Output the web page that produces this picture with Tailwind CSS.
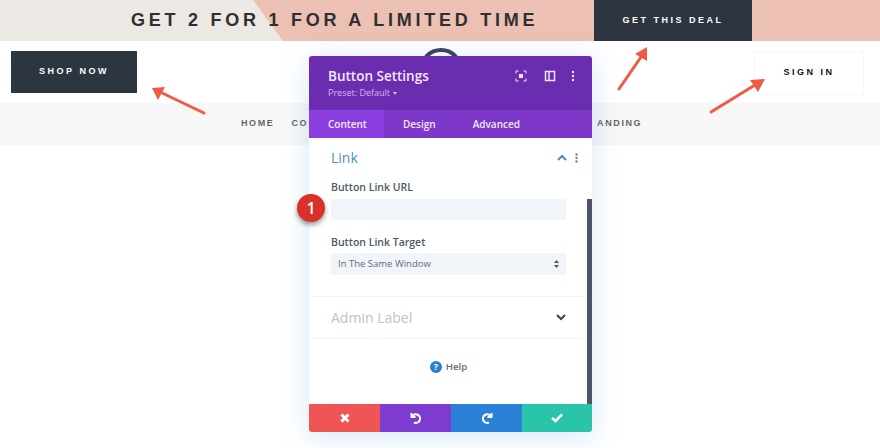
<!DOCTYPE html>
<html lang="en">
<head>
    <meta charset="UTF-8">
    <title>Button Settings</title>
    <script src="https://cdn.jsdelivr.net/npm/@tailwindcss/browser@4"></script>
</head>
<body class="bg-white">
    <div class="relative w-[880px] h-[448px] overflow-hidden font-['Liberation_Sans',sans-serif]">
        <!-- Promo bar -->
        <div class="relative h-[41px] bg-[#ecc0b2] flex">
            <div class="absolute inset-y-0 left-0 w-[283px] bg-[#ece8e3] [clip-path:polygon(0_0,253px_0,283px_100%,0_100%)]"></div>
            <div class="relative w-[594px] pl-[131px] pb-[1px] flex items-center text-[18px] font-bold tracking-[3.75px] text-[#2f2f33] whitespace-nowrap">GET 2 FOR 1 FOR A LIMITED TIME</div>
            <div class="relative w-[158px] bg-[#2c3540] flex items-center justify-center text-[9px] font-bold tracking-[2.5px] text-white">GET THIS DEAL</div>
        </div>

        <!-- Header -->
        <div class="h-[62px] flex items-start justify-between pt-[10px] pl-[11px] pr-[16px]">
            <div class="w-[126px] h-[42px] bg-[#2c3540] flex items-center justify-center text-[9px] font-bold tracking-[2.5px] text-white">SHOP NOW</div>
            <div class="w-[44px] h-[44px] mt-[-3px] mr-[9px] rounded-full border-[4px] border-[#3a3f5c]"></div>
            <div class="w-[110px] h-[44px] border border-[#f6f6f6] flex items-center justify-center text-[9px] font-bold tracking-[2.5px] text-[#111]">SIGN IN</div>
        </div>

        <!-- Nav -->
        <div class="h-[42px] pl-[241px] bg-[#f7f7f7] flex items-center text-[9px] font-bold tracking-[1.6px] text-[#666]">
            <span>HOME</span>
            <span class="ml-[17px]">CO</span>
            <span class="ml-[289px]">ANDING</span>
        </div>

        <!-- Arrows -->
        <svg class="absolute inset-0" width="880" height="448" fill="none" stroke="#ee5a45" stroke-width="3" stroke-linecap="round">
            <path d="M204 113 L160 92"/>
            <path d="M152 88 L165 87 L158 100 Z" fill="#ee5a45" stroke="none"/>
            <path d="M619 89 L641 57"/>
            <path d="M647 47 L647 61 L635 54 Z" fill="#ee5a45" stroke="none"/>
            <path d="M711 112 L755 85"/>
            <path d="M765 79 L758 92 L750 80 Z" fill="#ee5a45" stroke="none"/>
        </svg>

        <!-- Settings modal -->
        <div class="absolute left-[309px] top-[56px] w-[283px] h-[376px] flex flex-col rounded-[3px] bg-white shadow-[0_5px_30px_rgba(43,135,218,0.2)] font-['Open_Sans',sans-serif]">
            <div class="h-[54px] bg-[#6a2db0] rounded-t-[3px] pl-[19px] pr-[17px] flex justify-between">
                <div class="pt-[11px]">
                    <div class="text-[13.5px] leading-[18px] font-semibold text-[#f3e8fb]">Button Settings</div>
                    <div class="mt-[2px] text-[9px] leading-[12px] text-[#d3b8ee] flex items-center gap-[3px]">Preset: Default
                        <span class="w-0 h-0 border-x-[2px] border-x-transparent border-t-[3px] border-t-[#d3b8ee]"></span>
                    </div>
                </div>
                <div class="flex items-start gap-[15px] pt-[14px]">
                    <svg class="mr-[2px]" width="12" height="12" viewBox="0 0 12 12" fill="none" stroke="#efe4f9" stroke-width="1">
                        <path d="M1 3.500V1H3.500M8.500 1H11V3.500M11 8.500V11H8.500M3.500 11H1V8.500"/>
                        <rect x="4" y="4" width="4" height="4" fill="#efe4f9" stroke="none"/>
                    </svg>
                    <svg width="12" height="12" viewBox="0 0 12 12" fill="none" stroke="#efe4f9" stroke-width="1.500">
                        <rect x="1.500" y="1.500" width="9" height="9"/>
                        <path d="M5 1.500V10.500"/>
                    </svg>
                    <svg width="4" height="12" viewBox="0 0 4 12" fill="#efe4f9">
                        <circle cx="2" cy="2" r="1.200"/><circle cx="2" cy="6" r="1.200"/><circle cx="2" cy="10" r="1.200"/>
                    </svg>
                </div>
            </div>

            <div class="h-[28px] bg-[#7d37c9] flex text-[10px] font-semibold text-[#f3e8fb]">
                <div class="w-[75px] bg-[#8a3ee0] pl-[19px] flex items-center">Content</div>
                <div class="pl-[19px] flex items-center">Design</div>
                <div class="pl-[37px] flex items-center">Advanced</div>
            </div>

            <div class="relative flex-1">
                <div class="absolute right-0 top-[61px] bottom-0 w-[5px] bg-[#4c5568]"></div>

                <div class="h-[159px] px-[22px] border-b border-[#f5f5f7]">
                    <div class="h-[41px] mr-[-8px] pb-[2px] flex items-center justify-between">
                        <span class="text-[14px] text-[#4b8fc2]">Link</span>
                        <div class="flex items-center gap-[8px]">
                            <svg width="10" height="7" viewBox="0 0 10 7" fill="none" stroke="#4b8fc2" stroke-width="2"><path d="M1 6L5 2L9 6"/></svg>
                            <svg width="3" height="10" viewBox="0 0 3 10" fill="#4b8fc2"><circle cx="1.500" cy="1.500" r="1.200"/><circle cx="1.500" cy="5" r="1.200"/><circle cx="1.500" cy="8.500" r="1.200"/></svg>
                        </div>
                    </div>
                    <div class="text-[10.5px] leading-[14px] font-semibold text-[#4c5866] mt-[1px]">Button Link URL</div>
                    <div class="relative h-[21px] mt-[5px] mr-[4px] bg-[#f1f5f9] rounded-[2px]">
                        <div class="absolute left-[-34px] top-[-5px] w-[28px] h-[28px] rounded-full bg-[#d9302a] shadow-[0_3px_5px_rgba(0,0,0,0.4)] flex items-center justify-center text-[16px] font-semibold text-white">1</div>
                    </div>
                    <div class="text-[10.5px] leading-[14px] font-semibold text-[#4c5866] mt-[15px]">Button Link Target</div>
                    <div class="h-[22px] mt-[4px] mr-[4px] pl-[7px] pr-[7px] bg-[#f1f5f9] rounded-[2px] flex items-center justify-between text-[9.5px] font-medium text-[#5f6a7a]">
                        In The Same Window
                        <svg width="5" height="8" viewBox="0 0 5 8" fill="#4c5866"><path d="M2.500 0L5 3H0ZM2.500 8L0 5H5Z"/></svg>
                    </div>
                </div>

                <div class="h-[42px] pl-[22px] pr-[26px] flex items-center justify-between border-b border-[#f5f5f7]">
                    <span class="text-[14px] text-[#bcc3cb]">Admin Label</span>
                    <svg width="10" height="7" viewBox="0 0 10 7" fill="none" stroke="#3c4450" stroke-width="2"><path d="M1 1L5 5L9 1"/></svg>
                </div>

                <div class="h-[64px] pb-[8px] pr-[4px] flex items-center justify-center gap-[4px] text-[9.6px] font-semibold text-[#5f6a7a]">
                    <span class="w-[12px] h-[12px] rounded-full bg-[#2b7fd0] flex items-center justify-center text-[9px] font-bold text-white">?</span>
                    Help
                </div>
            </div>

            <div class="h-[28px] flex rounded-b-[3px] overflow-hidden text-white">
                <div class="w-[71px] bg-[#ef5555] flex items-center justify-center">
                    <svg width="10" height="10" viewBox="0 0 10 10" fill="none" stroke="white" stroke-width="3"><path d="M1.500 1.500L8.500 8.500M8.500 1.500L1.500 8.500"/></svg>
                </div>
                <div class="w-[71px] bg-[#7d3bcf] flex items-center justify-center">
                    <svg width="12" height="12" viewBox="0 0 12 12" fill="none" stroke="white" stroke-width="2"><path d="M1.500 1V5H5.500"/><path d="M2 4.500A4.300 4.300 0 1 1 4 10.500"/></svg>
                </div>
                <div class="w-[71px] bg-[#2b80d8] flex items-center justify-center">
                    <svg width="12" height="12" viewBox="0 0 12 12" fill="none" stroke="white" stroke-width="2"><path d="M10.500 1V5H6.500"/><path d="M10 4.500A4.300 4.300 0 1 0 8 10.500"/></svg>
                </div>
                <div class="flex-1 bg-[#29c4a9] flex items-center justify-center">
                    <svg width="12" height="10" viewBox="0 0 12 10" fill="none" stroke="white" stroke-width="2.500"><path d="M1 5L4.500 8L11 1.500"/></svg>
                </div>
            </div>
        </div>
    </div>
</body>
</html>
